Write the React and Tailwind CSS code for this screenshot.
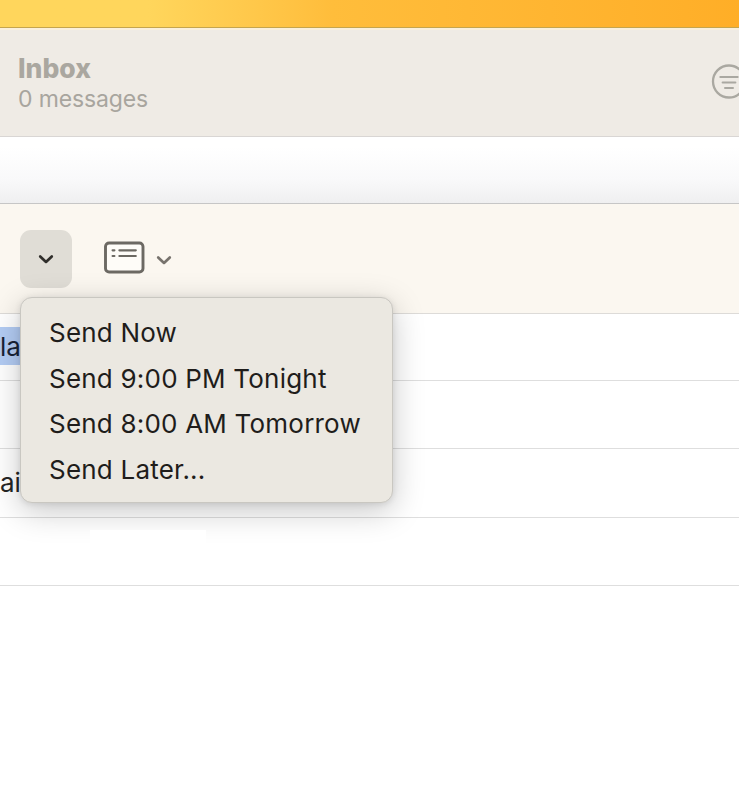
const sendOptions = [
    'Send Now',
    'Send 9:00 PM Tonight',
    'Send 8:00 AM Tomorrow',
    'Send Later...',
];

const Chevron = ({ className }) => (
    <svg className={className} width="16" height="10" viewBox="0 0 16 10" fill="none" stroke="currentColor" strokeWidth="2.7" strokeLinecap="round" strokeLinejoin="round">
        <path d="M2.2 2.4 8 7.9l5.8-5.5" />
    </svg>
);

const FilterIcon = () => (
    <svg className="shrink-0 text-[#aaa8a1]" width="36" height="36" viewBox="0 0 36 36" fill="none" stroke="currentColor" strokeWidth="2.3" strokeLinecap="round">
        <circle cx="18" cy="17.5" r="16" />
        <path d="M9.3 13h17.4M11.6 18.4h12.8M14 24.1h8" strokeWidth="2" />
    </svg>
);

const HeaderFieldsIcon = () => (
    <svg className="text-[#6c6963]" width="42" height="34" viewBox="0 0 42 34" fill="none" stroke="currentColor">
        <rect x="2.5" y="2" width="37.5" height="29" rx="3.6" fill="#fefcf8" strokeWidth="2.9" />
        <path d="M9.6 9.3h1.8M16.4 9.3h16.4M9.6 15h1.8M16.4 15h16.4" strokeWidth="2.2" strokeLinecap="round" />
    </svg>
);

const SendMenu = () => (
    <div className="absolute top-[67px] left-0 z-10 h-[206px] w-[373px] rounded-[12px] border border-[#c9c7c1] bg-[#ebe8e1] pt-[12px] pl-[28px] shadow-[0_8px_32px_rgba(0,0,0,0.22),0_1px_6px_rgba(0,0,0,0.1)]">
        {sendOptions.map((option) => (
            <button
                key={option}
                type="button"
                className="block h-[45.7px] text-left text-[26px] leading-[45.7px] tracking-[0.21px] whitespace-nowrap text-[#1f1d1b]"
            >
                {option}
            </button>
        ))}
    </div>
);

const App = () => {
    return (
        <div className="h-[800px] w-full overflow-hidden bg-white font-['Inter','Liberation_Sans',sans-serif]">
            {/* Desktop strip */}
            <div className="h-7 border-b border-[#c5a54d] bg-linear-to-r from-[#ffd65c] from-20% via-[#ffbd3b] via-45% to-[#ffae27]" />

            {/* Mailbox header */}
            <header className="flex h-[109px] justify-between border-t-2 border-b border-t-[#faf0dc] border-b-[#d9d6d4] bg-[#efebe5] pl-[18px]">
                <div className="pt-[22px]">
                    <h1 className="text-[26.5px] leading-[32px] font-extrabold tracking-[0px] text-[#aaa7a0]">Inbox</h1>
                    <p className="text-[23px] leading-[30px] tracking-[-0.15px] text-[#a8a59e]">0 messages</p>
                </div>
                <div className="mt-[34px] w-[28px] overflow-hidden">
                    <FilterIcon />
                </div>
            </header>

            <div className="h-[67px] border-b border-[#c6c6c6] bg-linear-to-b from-white from-15% via-[#f9f9fa] via-65% to-[#efeff0]" />

            {/* Compose toolbar */}
            <div className="flex h-[110px] items-start border-b border-[#dddbd8] bg-[#fbf7f0] pt-[26px] pl-5">
                <div className="relative">
                    <button type="button" className="flex h-[58px] w-[52px] items-center justify-center rounded-[11px] bg-[#e0ddd6] text-[#302e2b]">
                        <Chevron />
                    </button>
                    <SendMenu />
                </div>
                <button type="button" className="relative z-20 ml-[31px] flex h-[58px] items-center gap-[11px] pb-[3px] text-[#77736d]">
                    <HeaderFieldsIcon />
                    <Chevron className="mt-[4px]" />
                </button>
            </div>

            {/* Message fields */}
            <div className="h-[67px] border-b border-[#dedede] pt-[13px] text-[26px]">
                <span className="block h-[38px] w-5 overflow-hidden bg-[#b3ccf4] leading-[40px] text-[#182337]">la</span>
            </div>
            <div className="h-[68px] border-b border-[#dedede]" />
            <div className="h-[69px] border-b border-[#dedede] pt-[14px] text-[26px] leading-[40px] text-[#252525]">ai</div>
            <div className="h-[68px] border-b border-[#dedede] pt-3">
                <div className="relative z-20 ml-[90px] h-5 w-[116px] bg-white" />
            </div>
        </div>
    );
};

export default App;
